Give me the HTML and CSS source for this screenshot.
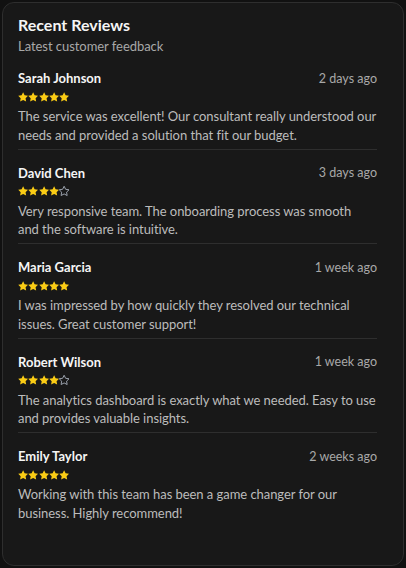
FILE: index.html
```html
<!DOCTYPE html>
<html>
<head>
<meta charset="utf-8">
<link rel="stylesheet" href="styles.css">
</head>
<body>
<svg class="defs" width="0" height="0">
  <defs>
    <path id="star" d="M12 2l3.09 6.26L22 9.27l-5 4.87 1.18 6.88L12 17.77l-6.18 3.25L7 14.14 2 9.27l6.91-1.01L12 2z"/>
  </defs>
</svg>
<div class="card">
  <div class="header">
    <h2 class="title">Recent Reviews</h2>
    <p class="subtitle">Latest customer feedback</p>
  </div>
  <div class="list">
    <div class="review">
      <div class="row"><span class="name">Sarah Johnson</span><span class="date">2 days ago</span></div>
      <div class="stars">
        <svg viewBox="1.5 1.5 21 21" class="s full"><use href="#star"/></svg><svg viewBox="1.5 1.5 21 21" class="s full"><use href="#star"/></svg><svg viewBox="1.5 1.5 21 21" class="s full"><use href="#star"/></svg><svg viewBox="1.5 1.5 21 21" class="s full"><use href="#star"/></svg><svg viewBox="1.5 1.5 21 21" class="s full"><use href="#star"/></svg>
      </div>
      <p class="text">The service was excellent! Our consultant really understood our needs and provided a solution that fit our budget.</p>
    </div>
    <div class="review">
      <div class="row"><span class="name">David Chen</span><span class="date">3 days ago</span></div>
      <div class="stars">
        <svg viewBox="1.5 1.5 21 21" class="s full"><use href="#star"/></svg><svg viewBox="1.5 1.5 21 21" class="s full"><use href="#star"/></svg><svg viewBox="1.5 1.5 21 21" class="s full"><use href="#star"/></svg><svg viewBox="1.5 1.5 21 21" class="s full"><use href="#star"/></svg><svg viewBox="1.5 1.5 21 21" class="s empty"><use href="#star"/></svg>
      </div>
      <p class="text">Very responsive team. The onboarding process was smooth<br>and the software is intuitive.</p>
    </div>
    <div class="review">
      <div class="row"><span class="name">Maria Garcia</span><span class="date">1 week ago</span></div>
      <div class="stars">
        <svg viewBox="1.5 1.5 21 21" class="s full"><use href="#star"/></svg><svg viewBox="1.5 1.5 21 21" class="s full"><use href="#star"/></svg><svg viewBox="1.5 1.5 21 21" class="s full"><use href="#star"/></svg><svg viewBox="1.5 1.5 21 21" class="s full"><use href="#star"/></svg><svg viewBox="1.5 1.5 21 21" class="s full"><use href="#star"/></svg>
      </div>
      <p class="text">I was impressed by how quickly they resolved our technical issues. Great customer support!</p>
    </div>
    <div class="review">
      <div class="row"><span class="name">Robert Wilson</span><span class="date">1 week ago</span></div>
      <div class="stars">
        <svg viewBox="1.5 1.5 21 21" class="s full"><use href="#star"/></svg><svg viewBox="1.5 1.5 21 21" class="s full"><use href="#star"/></svg><svg viewBox="1.5 1.5 21 21" class="s full"><use href="#star"/></svg><svg viewBox="1.5 1.5 21 21" class="s full"><use href="#star"/></svg><svg viewBox="1.5 1.5 21 21" class="s empty"><use href="#star"/></svg>
      </div>
      <p class="text">The analytics dashboard is exactly what we needed. Easy to use and provides valuable insights.</p>
    </div>
    <div class="review last">
      <div class="row"><span class="name">Emily Taylor</span><span class="date">2 weeks ago</span></div>
      <div class="stars">
        <svg viewBox="1.5 1.5 21 21" class="s full"><use href="#star"/></svg><svg viewBox="1.5 1.5 21 21" class="s full"><use href="#star"/></svg><svg viewBox="1.5 1.5 21 21" class="s full"><use href="#star"/></svg><svg viewBox="1.5 1.5 21 21" class="s full"><use href="#star"/></svg><svg viewBox="1.5 1.5 21 21" class="s full"><use href="#star"/></svg>
      </div>
      <p class="text">Working with this team has been a game changer for our business. Highly recommend!</p>
    </div>
  </div>
</div>
</body>
</html>
```
FILE: styles.css
```css
* { box-sizing: border-box; }
html, body { margin: 0; padding: 0; }
body {
  background: #111111;
  font-family: Lato, "Open Sans", sans-serif;
  width: 406px;
  height: 568px;
  padding: 2px;
}
.defs { position: absolute; }
.card {
  height: 564px;
  background: #181818;
  border: 1px solid #2e2e2e;
  border-radius: 12px;
  padding: 12px 15px 0 15px;
}
.title {
  margin: 0;
  font-size: 16px;
  line-height: 20px;
  font-weight: 700;
  color: #f5f5f5;
}
.subtitle {
  margin: 2px 0 0;
  font-size: 13px;
  line-height: 18px;
  letter-spacing: -0.05px;
  color: #a8a8a8;
}
.list { padding-right: 11px; }
.review {
  padding: 13px 0 4.5px;
  border-bottom: 1px solid #2e2e2e;
}
.review.last { border-bottom: none; }
.row {
  display: flex;
  justify-content: space-between;
  align-items: center;
  height: 20px;
}
.name {
  font-size: 13px;
  font-weight: 700;
  color: #f5f5f5;
}
.date {
  font-size: 12.5px;
  color: #a8a8a8;
}
.stars {
  display: flex;
  height: 14px;
  margin-top: 2px;
  align-items: center;
}
.s { width: 10.25px; height: 10.25px; }
.s.full { fill: #facc15; }
.s.empty { fill: none; stroke: #9ca3af; stroke-width: 2; }
.text {
  margin: 3px 0 0;
  font-size: 13px;
  letter-spacing: -0.05px;
  line-height: 18.5px;
  color: #bcbcbc;
}
```
